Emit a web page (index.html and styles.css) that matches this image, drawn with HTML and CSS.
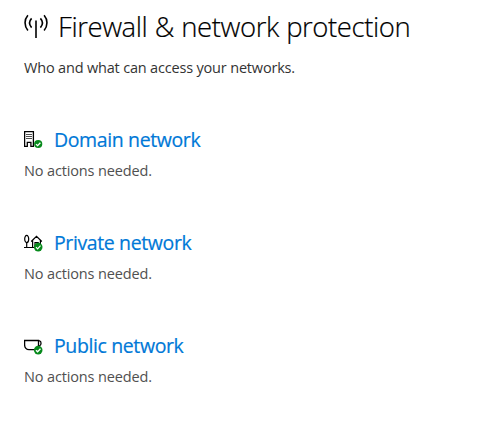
FILE: index.html
```
<!DOCTYPE html>
<html lang="en">
<head>
    <meta charset="UTF-8">
    <meta name="viewport" content="width=device-width, initial-scale=1.0">
    <title>Firewall &amp; network protection</title>
    <link rel="stylesheet" href="styles.css">
</head>
<body>
    <header class="page-header">
        <svg class="header-icon" viewBox="0 0 24 26" fill="none" stroke="currentColor" stroke-width="1.6">
            <path d="M12 7.5V25"/>
            <path d="M3.9 2.2C0.1 6.6 0.1 12.9 3.9 17.5M20.1 2.2C23.9 6.6 23.9 12.9 20.1 17.5"/>
            <path d="M7.6 5.4C5 8.3 5 11.8 7.6 14.6M16.4 5.4C19 8.3 19 11.8 16.4 14.6"/>
        </svg>
        <h1>Firewall &amp; network protection</h1>
    </header>
    <p class="intro">Who and what can access your networks.</p>

    <section class="network">
        <div class="network-title">
            <svg class="network-icon" viewBox="0 0 20 18" fill="none" stroke="#000" stroke-width="1.3">
                <path d="M0.6 15.4V0.6H9.4V15.4H6.9V11.3H3.3V15.4Z"/>
                <path d="M2.3 3.5H8M2.3 5.5H8M2.3 7.5H8" stroke-width="1" stroke-dasharray="1.4 0.6"/>
                <circle class="badge" cx="14.2" cy="13" r="4.1"/>
                <path class="check" d="M12 13.1L13.6 14.6L16.4 11.7"/>
            </svg>
            <h2>Domain network</h2>
        </div>
        <p class="status">No actions needed.</p>
    </section>

    <section class="network">
        <div class="network-title">
            <svg class="network-icon" viewBox="0 0 20 18" fill="none" stroke="#000" stroke-width="1.2">
                <path d="M0 13.5H12M2.7 13.5V8.8"/>
                <ellipse cx="2.7" cy="5" rx="2" ry="3.6"/>
                <path d="M7.2 7.5L12.5 2.4L17.8 7.5M8.6 6.5V13.5M16.4 6.5V11M11 13V8.5H14.2V11"/>
                <circle class="badge" cx="14.2" cy="13.1" r="4.3"/>
                <path class="check" d="M12 13.2L13.6 14.8L16.5 11.7"/>
            </svg>
            <h2>Private network</h2>
        </div>
        <p class="status">No actions needed.</p>
    </section>

    <section class="network">
        <div class="network-title">
            <svg class="network-icon" viewBox="0 0 20 18" fill="none" stroke="#000" stroke-width="1.3">
                <path d="M0.6 3.5H14.5V7.8C14.5 10.6 12.6 12.6 10.2 12.6H5C2.5 12.6 0.6 10.6 0.6 7.8Z"/>
                <path d="M14.5 3.9H15.6C17.5 4.3 17.5 8.4 15.6 8.8H14.5"/>
                <circle class="badge" cx="14.2" cy="13.1" r="4.3"/>
                <path class="check" d="M12 13.2L13.6 14.8L16.5 11.7"/>
            </svg>
            <h2>Public network</h2>
        </div>
        <p class="status">No actions needed.</p>
    </section>
</body>
</html>
```

FILE: styles.css
```
* {
    box-sizing: border-box;
}

body {
    margin: 0;
    padding: 8px 24px;
    background: #fff;
    color: #000;
    font-family: 'Open Sans', 'Noto Sans', sans-serif;
}

h1,
h2,
p {
    margin: 0;
    white-space: nowrap;
}

.page-header {
    display: flex;
    height: 40px;
}

.header-icon {
    width: 24px;
    height: 26px;
    margin: 5px 10px 0 0;
}

h1 {
    font-size: 27.5px;
    font-weight: 300;
    line-height: 38px;
    letter-spacing: -0.42px;
    word-spacing: 0.6px;
    -webkit-text-stroke: 0.2px;
}

.intro {
    margin-top: 10px;
    font-size: 14.5px;
    line-height: 20px;
    letter-spacing: -0.18px;
    color: #333;
}

.network {
    height: 103px;
}

.intro + .network {
    margin-top: 48px;
}

.network-title {
    display: flex;
}

.network-icon {
    width: 20px;
    height: 18px;
    margin: 5px 10px 0 0;
}

.badge {
    fill: #078a1c;
    stroke: none;
}

.check {
    stroke: #fff;
}

h2 {
    font-size: 19.5px;
    font-weight: 400;
    line-height: 28px;
    letter-spacing: -0.38px;
    color: #0078d7;
    -webkit-text-stroke: 0.2px;
}

.status {
    margin-top: 7px;
    font-size: 14.5px;
    line-height: 20px;
    letter-spacing: -0.14px;
    color: #505050;
}
```
